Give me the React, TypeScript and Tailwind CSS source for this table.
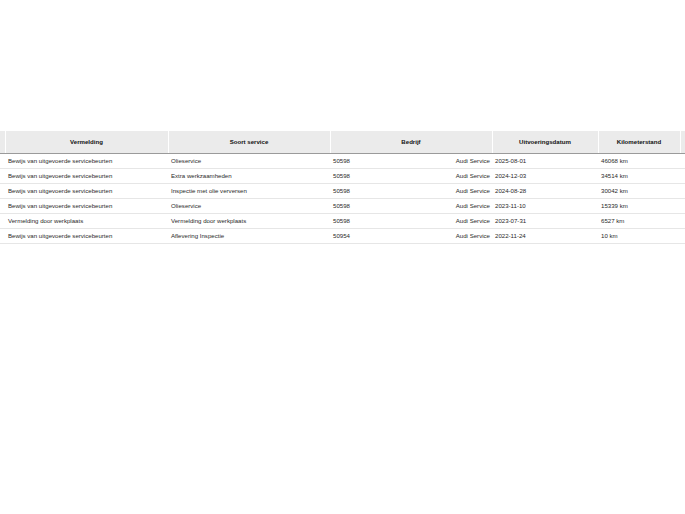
import React from 'react';

const rows = [
  { note: 'Bewijs van uitgevoerde servicebeurten', service: 'Olieservice', code: '50598', company: 'Audi Service', date: '2025-08-01', km: '46068 km' },
  { note: 'Bewijs van uitgevoerde servicebeurten', service: 'Extra werkzaamheden', code: '50598', company: 'Audi Service', date: '2024-12-03', km: '34514 km' },
  { note: 'Bewijs van uitgevoerde servicebeurten', service: 'Inspectie met olie verversen', code: '50598', company: 'Audi Service', date: '2024-08-28', km: '30042 km' },
  { note: 'Bewijs van uitgevoerde servicebeurten', service: 'Olieservice', code: '50598', company: 'Audi Service', date: '2023-11-10', km: '15339 km' },
  { note: 'Vermelding door werkplaats', service: 'Vermelding door werkplaats', code: '50598', company: 'Audi Service', date: '2023-07-31', km: '6527 km' },
  { note: 'Bewijs van uitgevoerde servicebeurten', service: 'Aflevering Inspectie', code: '50954', company: 'Audi Service', date: '2022-11-24', km: '10 km' },
];

const th = 'h-[22px] bg-[#ebebeb] border-r border-white border-b border-b-[#9a9a9a] font-bold text-center p-0 text-[#111]';
const td = 'h-[15px] border-b border-[#e6e6e6] pl-[3px] pr-[2px] pt-[1px] pb-0 align-middle whitespace-nowrap overflow-hidden';

export default function App() {
  return (
    <div className="w-[685px] h-[514px] overflow-hidden bg-white pt-[131px]" style={{ fontFamily: '"Liberation Sans", Arial, sans-serif' }}>
      <table className="table-fixed border-collapse text-[6.1px] text-[#2a2a2a] w-[760px]">
        <colgroup>
          <col className="w-[5px]" />
          <col className="w-[163px]" />
          <col className="w-[162px]" />
          <col className="w-[162px]" />
          <col className="w-[106px]" />
          <col className="w-[82px]" />
          <col className="w-[80px]" />
        </colgroup>
        <thead>
          <tr>
            <th className={th}></th>
            <th className={th}>Vermelding</th>
            <th className={th}>Soort service</th>
            <th className={th}>Bedrijf</th>
            <th className={th}>Uitvoeringsdatum</th>
            <th className={th}>Kilometerstand</th>
            <th className={th}></th>
          </tr>
        </thead>
        <tbody>
          {rows.map((r, i) => (
            <tr key={i}>
              <td className={td}></td>
              <td className={td}>{r.note}</td>
              <td className={td}>{r.service}</td>
              <td className={td}>
                <div className="flex justify-between">
                  <span>{r.code}</span>
                  <span>{r.company}</span>
                </div>
              </td>
              <td className={td}>{r.date}</td>
              <td className={td}>{r.km}</td>
              <td className={td}></td>
            </tr>
          ))}
        </tbody>
      </table>
    </div>
  );
}
